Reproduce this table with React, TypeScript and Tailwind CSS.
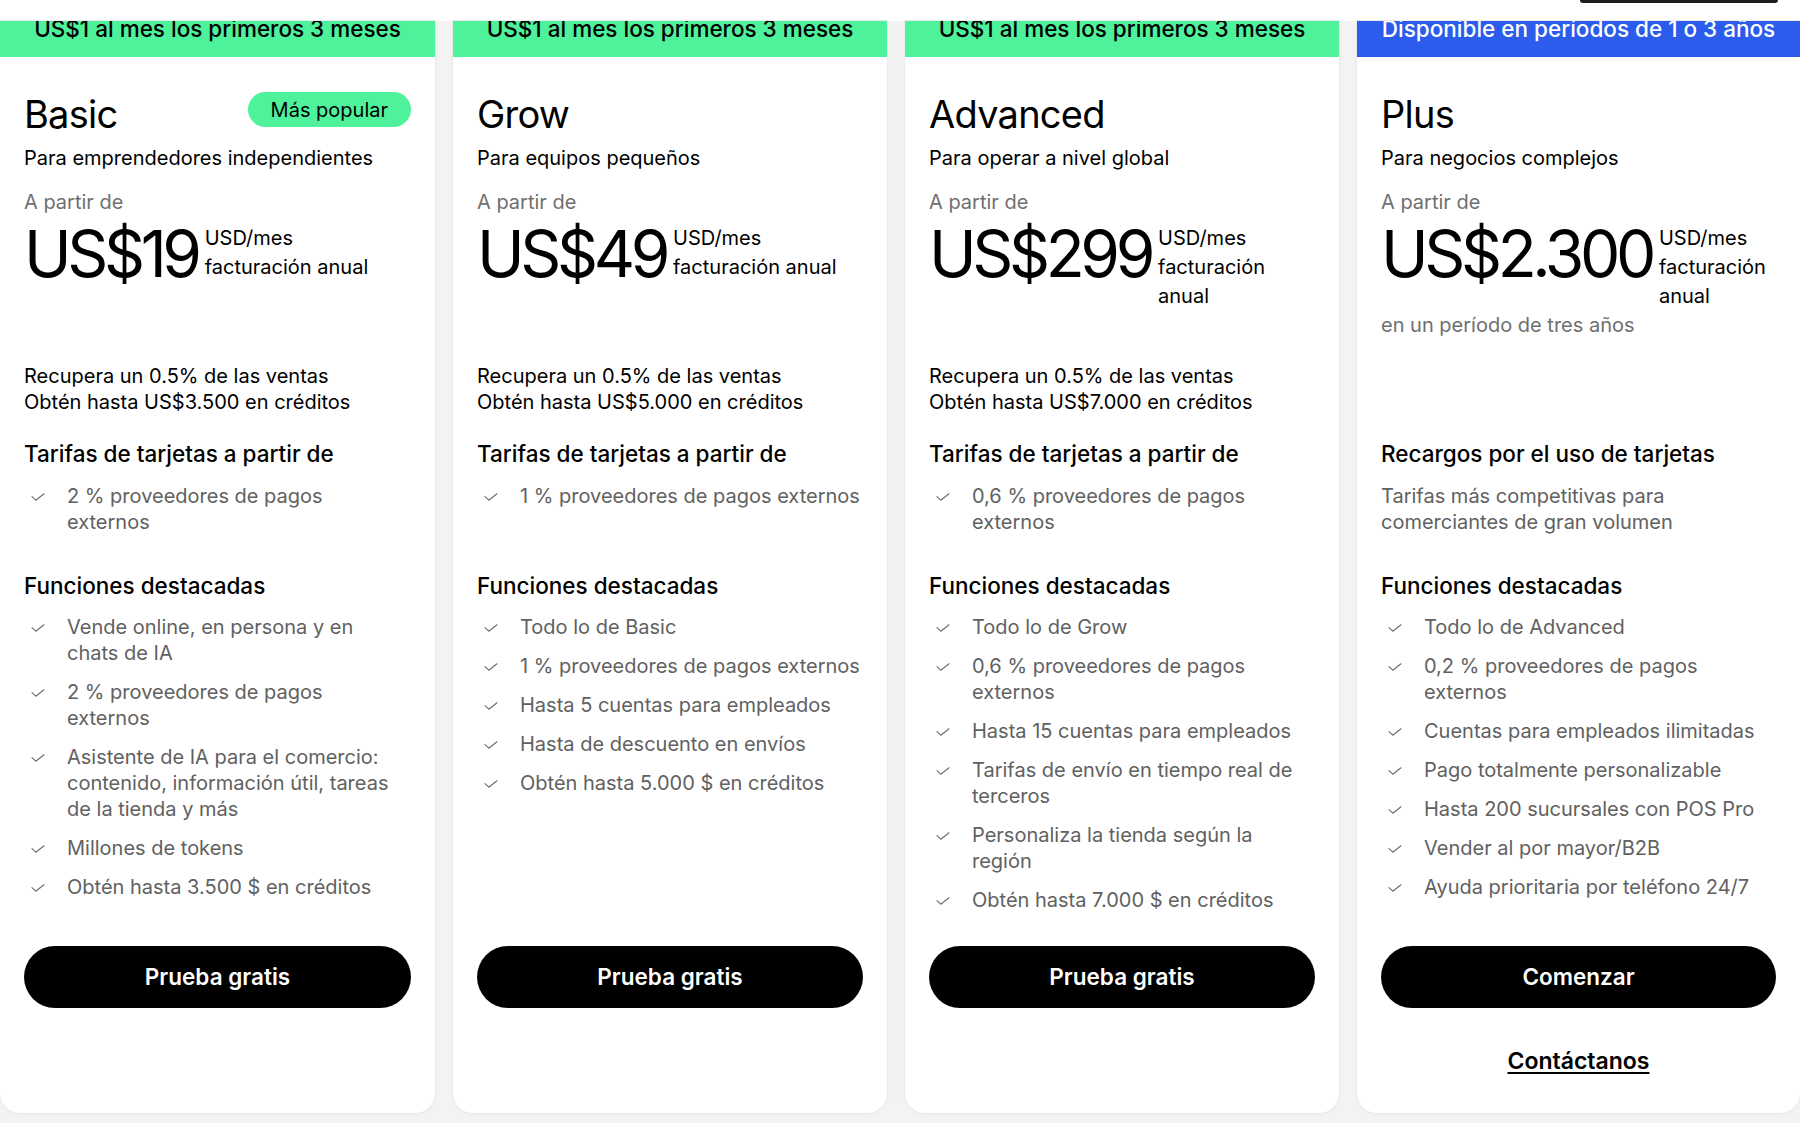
type Plan = {
  banner: string;
  bannerClass: string;
  name: string;
  popular?: boolean;
  tagline: string;
  price: string;
  note?: string;
  perks: string[];
  feesTitle: string;
  fees: string[];
  feesPlain?: boolean;
  features: string[];
  cta: string;
  contact?: boolean;
};

const plans: Plan[] = [
  {
    banner: "US$1 al mes los primeros 3 meses",
    bannerClass: "bg-[#4ef29b] text-black",
    name: "Basic",
    popular: true,
    tagline: "Para emprendedores independientes",
    price: "US$19",
    perks: ["Recupera un 0.5% de las ventas", "Obtén hasta US$3.500 en créditos"],
    feesTitle: "Tarifas de tarjetas a partir de",
    fees: ["2 % proveedores de pagos externos"],
    features: [
      "Vende online, en persona y en chats de IA",
      "2 % proveedores de pagos externos",
      "Asistente de IA para el comercio: contenido, información útil, tareas de la tienda y más",
      "Millones de tokens",
      "Obtén hasta 3.500 $ en créditos",
    ],
    cta: "Prueba gratis",
  },
  {
    banner: "US$1 al mes los primeros 3 meses",
    bannerClass: "bg-[#4ef29b] text-black",
    name: "Grow",
    tagline: "Para equipos pequeños",
    price: "US$49",
    perks: ["Recupera un 0.5% de las ventas", "Obtén hasta US$5.000 en créditos"],
    feesTitle: "Tarifas de tarjetas a partir de",
    fees: ["1 % proveedores de pagos externos"],
    features: [
      "Todo lo de Basic",
      "1 % proveedores de pagos externos",
      "Hasta 5 cuentas para empleados",
      "Hasta de descuento en envíos",
      "Obtén hasta 5.000 $ en créditos",
    ],
    cta: "Prueba gratis",
  },
  {
    banner: "US$1 al mes los primeros 3 meses",
    bannerClass: "bg-[#4ef29b] text-black",
    name: "Advanced",
    tagline: "Para operar a nivel global",
    price: "US$299",
    perks: ["Recupera un 0.5% de las ventas", "Obtén hasta US$7.000 en créditos"],
    feesTitle: "Tarifas de tarjetas a partir de",
    fees: ["0,6 % proveedores de pagos externos"],
    features: [
      "Todo lo de Grow",
      "0,6 % proveedores de pagos externos",
      "Hasta 15 cuentas para empleados",
      "Tarifas de envío en tiempo real de terceros",
      "Personaliza la tienda según la región",
      "Obtén hasta 7.000 $ en créditos",
    ],
    cta: "Prueba gratis",
  },
  {
    banner: "Disponible en períodos de 1 o 3 años",
    bannerClass: "bg-[#2b5ceb] text-white",
    name: "Plus",
    tagline: "Para negocios complejos",
    price: "US$2.300",
    note: "en un período de tres años",
    perks: [],
    feesTitle: "Recargos por el uso de tarjetas",
    fees: ["Tarifas más competitivas para comerciantes de gran volumen"],
    feesPlain: true,
    features: [
      "Todo lo de Advanced",
      "0,2 % proveedores de pagos externos",
      "Cuentas para empleados ilimitadas",
      "Pago totalmente personalizable",
      "Hasta 200 sucursales con POS Pro",
      "Vender al por mayor/B2B",
      "Ayuda prioritaria por teléfono 24/7",
    ],
    cta: "Comenzar",
    contact: true,
  },
];

const Check = () => (
  <svg viewBox="0 0 14 8" className="mt-[10px] ml-[7px] h-[8px] w-[14px] shrink-0" fill="none">
    <polyline points="1,3.6 4.8,7.2 13,0.8" stroke="#6b6b6b" strokeWidth="1.1" strokeLinecap="round" strokeLinejoin="round" />
  </svg>
);

const CheckList = ({ items }: { items: string[] }) => (
  <ul className="flex flex-col gap-[13px] pr-[3px]">
    {items.map((item) => (
      <li key={item} className="flex text-[20px] leading-[26px] text-[#616161]">
        <Check />
        <span className="ml-[22px]">{item}</span>
      </li>
    ))}
  </ul>
);

const PlanCard = ({ plan }: { plan: Plan }) => (
  <div className="flex min-h-[1092px] flex-col rounded-b-[20px] bg-white shadow-[0_0_0_1px_#ebebeb,0_1px_4px_rgba(0,0,0,0.04)]">
    <div className={`h-[36px] overflow-hidden text-center ${plan.bannerClass}`}>
      <p className="-mt-[3px] text-[22.5px] leading-[22px] font-medium">{plan.banner}</p>
    </div>

    <div className="flex flex-1 flex-col px-[24px] pt-[34px]">
      <div className="flex h-[46px] items-start justify-between">
        <h3 className="text-[38px] leading-[46px] tracking-[-0.02em] text-black">{plan.name}</h3>
        {plan.popular && (
          <span className="mt-[1px] flex h-[35px] items-center rounded-full bg-[#4ef29b] px-[23px] text-[20px] text-black">
            Más popular
          </span>
        )}
      </div>
      <p className="mt-[8px] text-[20px] leading-[26px] text-black">{plan.tagline}</p>
      <p className="mt-[18px] text-[20px] leading-[26px] text-[#6f6f6f]">A partir de</p>

      <div className="mt-[7px] h-[141px]">
        <div className="flex items-start gap-[7px]">
          <span className="text-[64px] leading-[64px] tracking-[-0.068em] text-black">{plan.price}</span>
          <div className="mt-[2px] text-[20px] leading-[28.8px] text-black">
            <p>USD/mes</p>
            <p>facturación anual</p>
          </div>
        </div>
        {plan.note && <p className="mt-[2px] text-[20px] leading-[26px] text-[#6f6f6f]">{plan.note}</p>}
      </div>

      <div className="h-[52px] text-[20px] leading-[26px] text-black">
        {plan.perks.map((p) => (
          <p key={p}>{p}</p>
        ))}
      </div>

      <h4 className="mt-[24px] text-[22.5px] leading-[30px] font-medium text-black">{plan.feesTitle}</h4>
      <div className="mt-[14px] min-h-[52px]">
        {plan.feesPlain ? (
          <p className="pr-[20px] text-[20px] leading-[26px] text-[#616161]">{plan.fees[0]}</p>
        ) : (
          <CheckList items={plan.fees} />
        )}
      </div>

      <h4 className="mt-[36px] text-[22.5px] leading-[30px] font-medium text-black">Funciones destacadas</h4>
      <div className="mt-[13px]">
        <CheckList items={plan.features} />
      </div>

      <button className="mt-auto h-[62px] w-full shrink-0 rounded-full bg-black text-[22.5px] font-semibold text-white">
        {plan.cta}
      </button>
      <div className="h-[105px] shrink-0 pt-[38px] text-center">
        {plan.contact && (
          <a className="text-[23px] leading-[30px] font-semibold text-black underline underline-offset-[3px]">
            Contáctanos
          </a>
        )}
      </div>
    </div>
  </div>
);

const App = () => {
  return (
    <div className="h-[1123px] w-[1800px] overflow-hidden bg-white font-['Inter',sans-serif]">
      <div className="flex h-[21px] justify-end">
        <div className="mr-[22px] h-[3px] w-[198px] rounded-b-full bg-[#1c1c1c]" />
      </div>
      <div className="grid h-[1102px] grid-cols-[435px_434px_434px_1fr] items-start gap-x-[18px] bg-[#f3f3f3]">
        {plans.map((plan) => (
          <PlanCard key={plan.name} plan={plan} />
        ))}
      </div>
    </div>
  );
};

export default App;
